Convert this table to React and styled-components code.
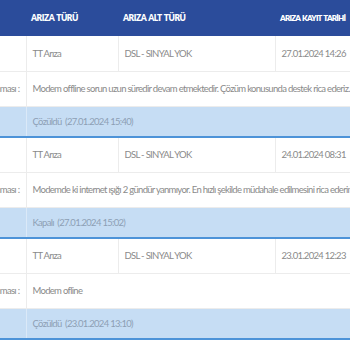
import React from "react";
import styled, { createGlobalStyle } from "styled-components";

const Global = createGlobalStyle`
  html, body { margin: 0; padding: 0; background: #fff; }
  body { font-family: Lato, "Open Sans", sans-serif; }
`;

const Viewport = styled.div`
  width: 350px;
  height: 350px;
  overflow: hidden;
`;

const Table = styled.table`
  border-collapse: collapse;
  table-layout: fixed;
  width: 462px;
  margin-left: -46px;
  font-size: 9.5px;
  letter-spacing: -0.7px;
  color: #8a8a8a;
`;

const HeadRow = styled.tr`
  background: #2b4c9b;
  height: 36px;
`;

const HeadCell = styled.th`
  color: #fff;
  font-weight: 800;
  font-size: ${(p) => (p.$tight ? "8px" : "8.5px")};
  letter-spacing: ${(p) => (p.$tight ? "-0.75px" : "-0.45px")};
  word-spacing: 1px;
  text-align: left;
  padding: 0 5px;
  white-space: nowrap;
`;

const DataRow = styled.tr`
  height: 35px;
  border-bottom: 1px solid #ececec;
`;

const Cell = styled.td`
  padding: 0 6px;
  white-space: nowrap;
  overflow: hidden;
  border-left: ${(p) => (p.$first ? "none" : "1px solid #ececec")};
`;

const LabelCell = styled.td`
  padding: 0 6px;
  white-space: nowrap;
  overflow: hidden;
  color: #8a8a8a;
`;

const DescRow = styled.tr`
  height: 35px;
  border-bottom: 1px solid #ececec;
`;

const StatusRow = styled.tr`
  height: 31px;
  background: #c6ddf4;
  border-bottom: 2px solid #4d93d8;
`;

const StatusCell = styled.td`
  padding: 0 6px;
  white-space: pre;
  color: #8d9fb4;
  border-left: 1px solid #dbe9f8;
`;

const rows = [
  {
    tur: "TT Arıza",
    alt: "DSL - SINYAL YOK",
    tarih: "27.01.2024 14:26",
    desc: "Modem offline sorun uzun süredir devam etmektedir. Çözüm konusunda destek rica ederiz.",
    status: "Çözüldü  (27.01.2024 15:40)",
  },
  {
    tur: "TT Arıza",
    alt: "DSL - SINYAL YOK",
    tarih: "24.01.2024 08:31",
    desc: "Modemde ki internet ışığı 2 gündür yanmıyor. En hızlı şekilde müdahale edilmesini rica ederim.",
    status: "Kapalı  (27.01.2024 15:02)",
  },
  {
    tur: "TT Arıza",
    alt: "DSL - SINYAL YOK",
    tarih: "23.01.2024 12:23",
    desc: "Modem ofline",
    status: "Çözüldü  (23.01.2024 13:10)",
  },
];

export default function App() {
  return (
    <>
      <Global />
      <Viewport>
        <Table>
          <colgroup>
            <col style={{ width: 72 }} />
            <col style={{ width: 92 }} />
            <col style={{ width: 157 }} />
            <col style={{ width: 141 }} />
          </colgroup>
          <thead>
            <HeadRow>
              <HeadCell />
              <HeadCell>ARIZA TÜRÜ</HeadCell>
              <HeadCell>ARIZA ALT TÜRÜ</HeadCell>
              <HeadCell $tight>ARIZA KAYIT TARİHİ</HeadCell>
            </HeadRow>
          </thead>
          <tbody>
            {rows.map((r, i) => (
              <React.Fragment key={i}>
                <DataRow>
                  <Cell $first />
                  <Cell>{r.tur}</Cell>
                  <Cell>{r.alt}</Cell>
                  <Cell>{r.tarih}</Cell>
                </DataRow>
                <DescRow>
                  <LabelCell>Arıza Açıklaması :</LabelCell>
                  <Cell colSpan={3}>{r.desc}</Cell>
                </DescRow>
                <StatusRow>
                  <LabelCell>Durumu :</LabelCell>
                  <StatusCell colSpan={3}>{r.status}</StatusCell>
                </StatusRow>
              </React.Fragment>
            ))}
          </tbody>
        </Table>
      </Viewport>
    </>
  );
}
